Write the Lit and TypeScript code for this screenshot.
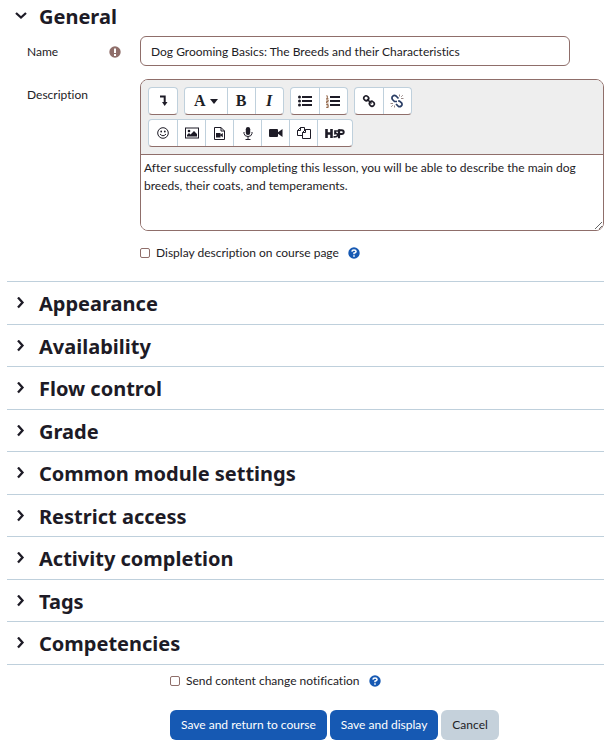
import { LitElement, html, css, svg, nothing, TemplateResult } from "lit";
import { customElement, property, state } from "lit/decorators.js";

const icon = (w: number, h: number, body: TemplateResult) =>
  html`<svg width=${w} height=${h} viewBox="0 0 ${w} ${h}" aria-hidden="true">${body}</svg>`;

const ink = "#1d1b26";

const icons = {
  toggle: icon(9, 12, svg`<path d="M1 1.500h4.700V7" fill="none" stroke=${ink} stroke-width="2"/><path d="M3 7h5.500L5.700 11z" fill=${ink}/>`),
  caret: icon(8, 5, svg`<path d="M0 0h8L4 5z" fill=${ink}/>`),
  bullets: icon(14, 12, svg`<g fill=${ink}><circle cx="1.500" cy="2" r="1.500"/><circle cx="1.500" cy="6" r="1.500"/><circle cx="1.500" cy="10" r="1.500"/><path d="M4 1h10v2H4zM4 5h10v2H4zM4 9h10v2H4z"/></g>`),
  numbers: icon(14, 13, svg`<g fill=${ink}><path d="M4 1h10v2H4zM4 5h10v2H4zM4 9h10v2H4z"/></g><path d="M.3.8h1v3M0 3.800h2.500M.2 5h2v1.500H.4V8h2M.2 9.500h2V12.500H.2M.6 11h1.500" fill="none" stroke="#8a5a3a" stroke-width=".9"/>`),
  link: icon(14, 14, svg`<g fill="none" stroke=${ink} stroke-width="1.600"><rect x="1.800" y="2" width="5" height="4.500" rx="2.200" transform="rotate(45 4.200 4.200)"/><rect x="7.300" y="7.500" width="5" height="4.500" rx="2.200" transform="rotate(45 9.800 9.800)"/><path d="M5 5l4.500 4.500"/></g>`),
  unlink: icon(14, 14, svg`<g fill="none" stroke="#2c3f66" stroke-width="1.700"><path d="M8.500 4.500L6 2Q4.300.8 2.800 2.200T2.500 5.500L4.500 7.500H7M6 10l2.200 2.200q1.500 1 3-.2t.3-3.200L9.500 7H8"/></g><path d="M9.500.500v2M13.500 4.500h-2.500M12.800 1.200l-1.600 1.600M4.500 13.500v-2M.5 9.500H3M1.200 12.800l1.600-1.600" stroke="#9a8a88"/>`),
  smile: icon(12, 12, svg`<circle cx="6" cy="6" r="5.300" fill="none" stroke=${ink}/><circle cx="4.200" cy="4.500" r=".9" fill=${ink}/><circle cx="7.800" cy="4.500" r=".9" fill=${ink}/><path d="M3 7q3 3.500 6 0" fill="none" stroke=${ink}/>`),
  image: icon(14, 12, svg`<rect x=".5" y="1" width="13" height="10" fill="none" stroke=${ink}/><circle cx="4" cy="4" r="1.300" fill=${ink}/><path d="M2 9.500V8l2-2 1.500 1.500L9 4l3 3v2.500z" fill=${ink}/>`),
  media: icon(11, 13, svg`<path d="M.5.500H7L10.500 4v8.500H.5zM7 .5V4h3.500" fill="none" stroke=${ink}/><path d="M2 6h4.500v4.500H2zM6 8l2.800-2v4.500z" fill=${ink}/>`),
  mic: icon(10, 13, svg`<rect x="2.800" y="0" width="4.400" height="8" rx="2.200" fill=${ink}/><path d="M1 5v1.500Q1.500 9.500 5 9.500t4-3V5M5 9.500v3M2.500 12.500h5" fill="none" stroke=${ink}/>`),
  camera: icon(14, 10, svg`<rect x="0" y="1" width="9" height="8" rx="1" fill=${ink}/><path d="M8 5l5.500-4v8z" fill=${ink}/>`),
  files: icon(14, 14, svg`<path d="M5 9.500H.5V4.500l3-3h4V4M3.500 1.500v3h-3M5.500 12.500V6.500l3-3h5v9zM8.500 3.500v3h-3" fill="#fff" stroke=${ink}/>`),
  h5p: icon(20, 12, svg`<g fill="none" stroke=${ink}><path d="M1.500 2v9M6.500 2v9M1.500 6.500h5" stroke-width="2.600"/><path d="M14 3.200h2.700q2 0 2 1.900t-2 1.900H14" stroke-width="2"/><path d="M14 2.200v9" stroke-width="2.200"/><path d="M13 4H10v2.600q2.600-.6 2.600 1.400T8.500 9.800" stroke-width="1.700"/></g>`),
  required: icon(12, 12, svg`<circle cx="6" cy="6" r="5.700" fill="#8f6e6a"/><path d="M5 2.500h2V7H5zM5 8h2v2H5z" fill="#fff"/>`),
  help: icon(12, 12, svg`<circle cx="6" cy="6" r="5.700" fill="#1659b3"/><path d="M3.900 4.600Q4 3 6 3t2.100 1.600Q8.100 5.700 6 6.200V7.300" fill="none" stroke="#fff" stroke-width="1.500"/><path d="M5.200 8.200h1.600v1.500H5.200z" fill="#fff"/>`),
  right: icon(12, 12, svg`<path d="M3 .500l4.500 5L3 10.500" fill="none" stroke=${ink} stroke-width="2.300"/>`),
  down: icon(12, 12, svg`<path d="M1 3L6 7.500 11 3" fill="none" stroke=${ink} stroke-width="2.300"/>`),
};

type Tool = { label: string; face: TemplateResult };
const tool = (label: string, face: TemplateResult): Tool => ({ label, face });

const toolbar: Tool[][] = [
  [tool("Show more buttons", icons.toggle)],
  [
    tool("Paragraph styles", html`<span class="glyph">A</span>${icons.caret}`),
    tool("Bold", html`<span class="glyph">B</span>`),
    tool("Italic", html`<span class="glyph italic">I</span>`),
  ],
  [tool("Unordered list", icons.bullets), tool("Ordered list", icons.numbers)],
  [tool("Link", icons.link), tool("Unlink", icons.unlink)],
  [
    tool("Emoji picker", icons.smile),
    tool("Insert image", icons.image),
    tool("Insert media", icons.media),
    tool("Record audio", icons.mic),
    tool("Record video", icons.camera),
    tool("Manage files", icons.files),
    tool("Insert H5P", icons.h5p),
  ],
];

const base = css`
  :host { display: block; }
  * { box-sizing: border-box; }
  svg { display: block; flex: none; }
  button, input, textarea { font: inherit; color: inherit; }
`;

@customElement("editor-toolbar")
class EditorToolbar extends LitElement {
  static styles = [base, css`
    .bar { display: flex; flex-wrap: wrap; gap: 4px 6px; padding: 7px; background: #eee; border-bottom: 1px solid #8f6e6a; }
    .group { display: flex; height: 28px; background: #fff; border: 1px solid #bfd0dc; border-bottom-color: #8f6e6a; border-radius: 4px; }
    .tool { display: flex; align-items: center; justify-content: center; gap: 4px; min-width: 28px; padding: 0 4px; border: 0; background: none; }
    .tool + .tool { border-left: 1px solid #bfd0dc; }
    .tool:has(.glyph + svg) { padding: 0 9px; }
    .tool:last-child:nth-child(7) { padding: 0 7px; }
    .glyph { font: bold 16px/20px "Liberation Serif", serif; }
    .italic { font-style: italic; }
  `];
  render() {
    return html`<div class="bar" role="toolbar" aria-label="Editor">
      ${toolbar.map((g) => html`<div class="group" role="group">
        ${g.map((t) => html`<button class="tool" type="button" aria-label=${t.label}>${t.face}</button>`)}
      </div>`)}
    </div>`;
  }
}

@customElement("form-section")
class FormSection extends LitElement {
  @property() heading = "";
  @property({ type: Boolean, reflect: true }) open = false;
  static styles = [base, css`
    .title { margin: 0; color: #1d1b26; font: bold 20px/28px "Noto Sans", sans-serif; }
    .toggle { display: flex; align-items: center; gap: 12px; width: 100%; padding: 0 0 0 8px; border: 0; background: none; text-align: left; }
    .chevron { padding-bottom: 3px; }
  `];
  render() {
    return html`<h3 class="title">
        <button class="toggle" type="button" aria-expanded=${this.open} @click=${() => (this.open = !this.open)}>
          <span class="chevron">${this.open ? icons.down : icons.right}</span>${this.heading}
        </button>
      </h3>
      ${this.open ? html`<slot></slot>` : nothing}`;
  }
}

@customElement("app-root")
class AppRoot extends LitElement {
  @state() name = "Dog Grooming Basics: The Breeds and their Characteristics";
  private sections = [
    "Appearance", "Availability", "Flow control", "Grade", "Common module settings",
    "Restrict access", "Activity completion", "Tags", "Competencies",
  ];
  static styles = [base, css`
    :host { font: 12px/18px Lato, "Noto Sans", sans-serif; font-variant-ligatures: none; color: #1d2125; background: #fff; }
    .form { padding: 3px 8px 7px 7px; }
    .fields { display: grid; grid-template-columns: 113px minmax(0, 1fr); row-gap: 12px; padding: 5px 0 18px 20px; }
    .label { display: flex; justify-content: space-between; align-items: center; height: 31px; padding-right: 19px; }
    .text { width: 100%; height: 30px; padding: 0 10px; border: 1px solid #8f6e6a; border-radius: 6px; background: #fff; }
    .short { height: 30px; padding-right: 34px; }
    .editor { border: 1px solid #8f6e6a; border-radius: 8px; overflow: hidden; }
    .area { display: block; width: 100%; height: 75px; padding: 4px 3px; border: 0; outline: 0; background: #fff; resize: vertical; }
    .check { display: flex; align-items: center; gap: 6px; height: 20px; }
    .box { appearance: none; width: 10px; height: 10px; margin: 0; border: 1px solid #8f6e6a; border-radius: 2px; background: #fff; }
    .box:checked { background: #1659b3; }
    .help { padding: 0; margin-left: 3px; border: 0; background: none; }
    .second { grid-column: 2; }
    .row { padding-top: 8px; height: 43px; border-top: 1px solid #bfd0dc; }
    .row:nth-child(even) { height: 42px; }
    .footer { padding: 6px 0 0 163px; border-top: 1px solid #bfd0dc; }
    .actions { display: flex; gap: 3px; padding-top: 19px; }
    .btn { height: 30px; padding: 0 11px; border: 0; border-radius: 6px; background: #1659b3; color: #fff; white-space: nowrap; }
    .cancel { background: #c5d1db; color: #1d2125; }
  `];
  private check(id: string, label: string) {
    return html`<div class="check">
      <input class="box" type="checkbox" id=${id}><label for=${id}>${label}</label>
      <button class="help" type="button" aria-label="Help with ${label}">${icons.help}</button>
    </div>`;
  }
  render() {
    return html`<form class="form" @submit=${(e: Event) => e.preventDefault()}>
      <form-section heading="General" open>
        <div class="fields">
          <div class="label"><label for="name">Name</label>${icons.required}</div>
          <div class="short"><input class="text" id="name" .value=${this.name}></div>
          <label class="label" for="description">Description</label>
          <div class="editor">
            <editor-toolbar></editor-toolbar>
            <textarea class="area" id="description" spellcheck="false" .value=${"After successfully completing this lesson, you will be able to describe the main dog breeds, their coats, and temperaments."}></textarea>
          </div>
          <div class="second">${this.check("show", "Display description on course page")}</div>
        </div>
      </form-section>
      <div class="sections">
        ${this.sections.map((s) => html`<form-section class="row" heading=${s}></form-section>`)}
      </div>
      <div class="footer">
        ${this.check("notify", "Send content change notification")}
        <div class="actions">
          <button class="btn">Save and return to course</button>
          <button class="btn">Save and display</button>
          <button class="btn cancel" type="button">Cancel</button>
        </div>
      </div>
    </form>`;
  }
}
